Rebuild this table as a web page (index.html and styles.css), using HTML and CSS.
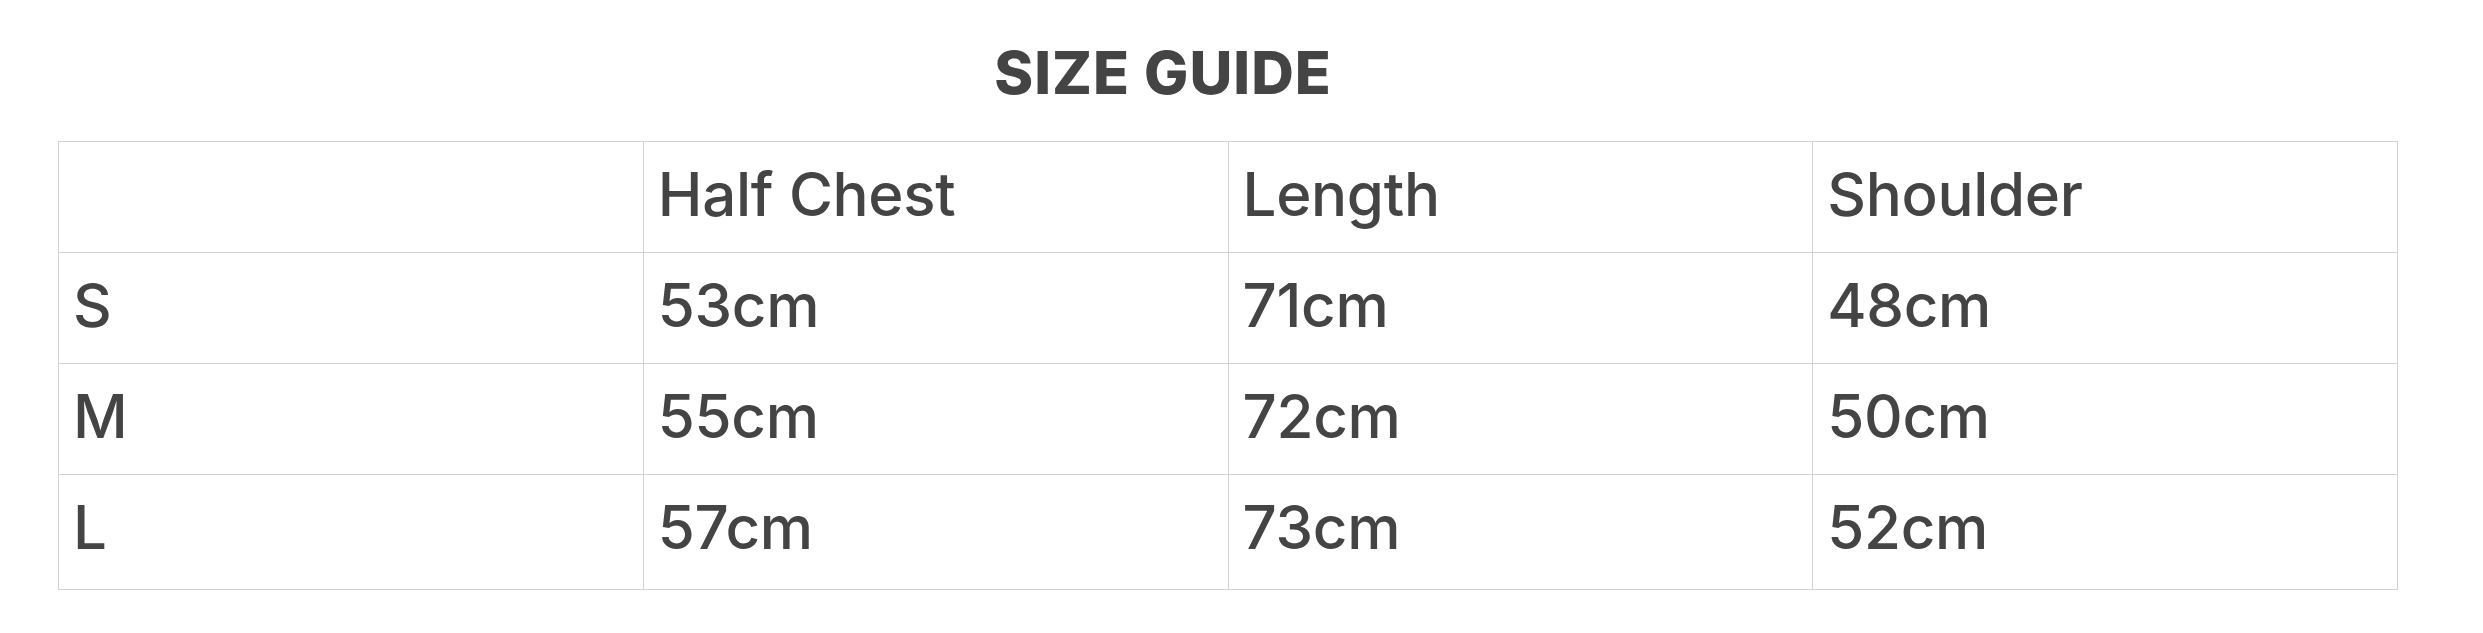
FILE: index.html
```html
<!DOCTYPE html>
<html lang="en">
<head>
<meta charset="utf-8">
<title>Size Guide</title>
<link rel="stylesheet" href="styles.css">
</head>
<body>
<div class="guide">
  <h2 class="guide-title">SIZE GUIDE</h2>
  <table class="size-table">
    <thead>
      <tr><th></th><th>Half Chest</th><th>Length</th><th>Shoulder</th></tr>
    </thead>
    <tbody>
      <tr><td>S</td><td>53cm</td><td>71cm</td><td>48cm</td></tr>
      <tr><td>M</td><td>55cm</td><td>72cm</td><td>50cm</td></tr>
      <tr><td>L</td><td>57cm</td><td>73cm</td><td>52cm</td></tr>
    </tbody>
  </table>
</div>
</body>
</html>
```
FILE: styles.css
```css
html, body {
  margin: 0;
  padding: 0;
  background: #ffffff;
}
body {
  font-family: Inter, "Liberation Sans", Arial, sans-serif;
  color: #444444;
}
.guide {
  width: 2340px;
  margin-left: 58px;
  padding-top: 37px;
}
.guide-title {
  margin: 0 0 32px 0;
  padding-right: 130px;
  text-align: center;
  font-size: 59px;
  line-height: 72px;
  font-weight: 800;
  letter-spacing: 1px;
  color: #444444;
}
.size-table {
  width: 2340px;
  border-collapse: collapse;
  table-layout: fixed;
}
.size-table th,
.size-table td {
  border: 1.5px solid #d3d3d3;
  padding: 16px 14px 22px 14px;
  font-size: 60px;
  line-height: 72px;
  font-weight: 500;
  letter-spacing: -0.3px;
  text-align: left;
  vertical-align: top;
  color: #444444;
}
.size-table tbody tr:last-child td {
  padding-bottom: 26px;
}
```
